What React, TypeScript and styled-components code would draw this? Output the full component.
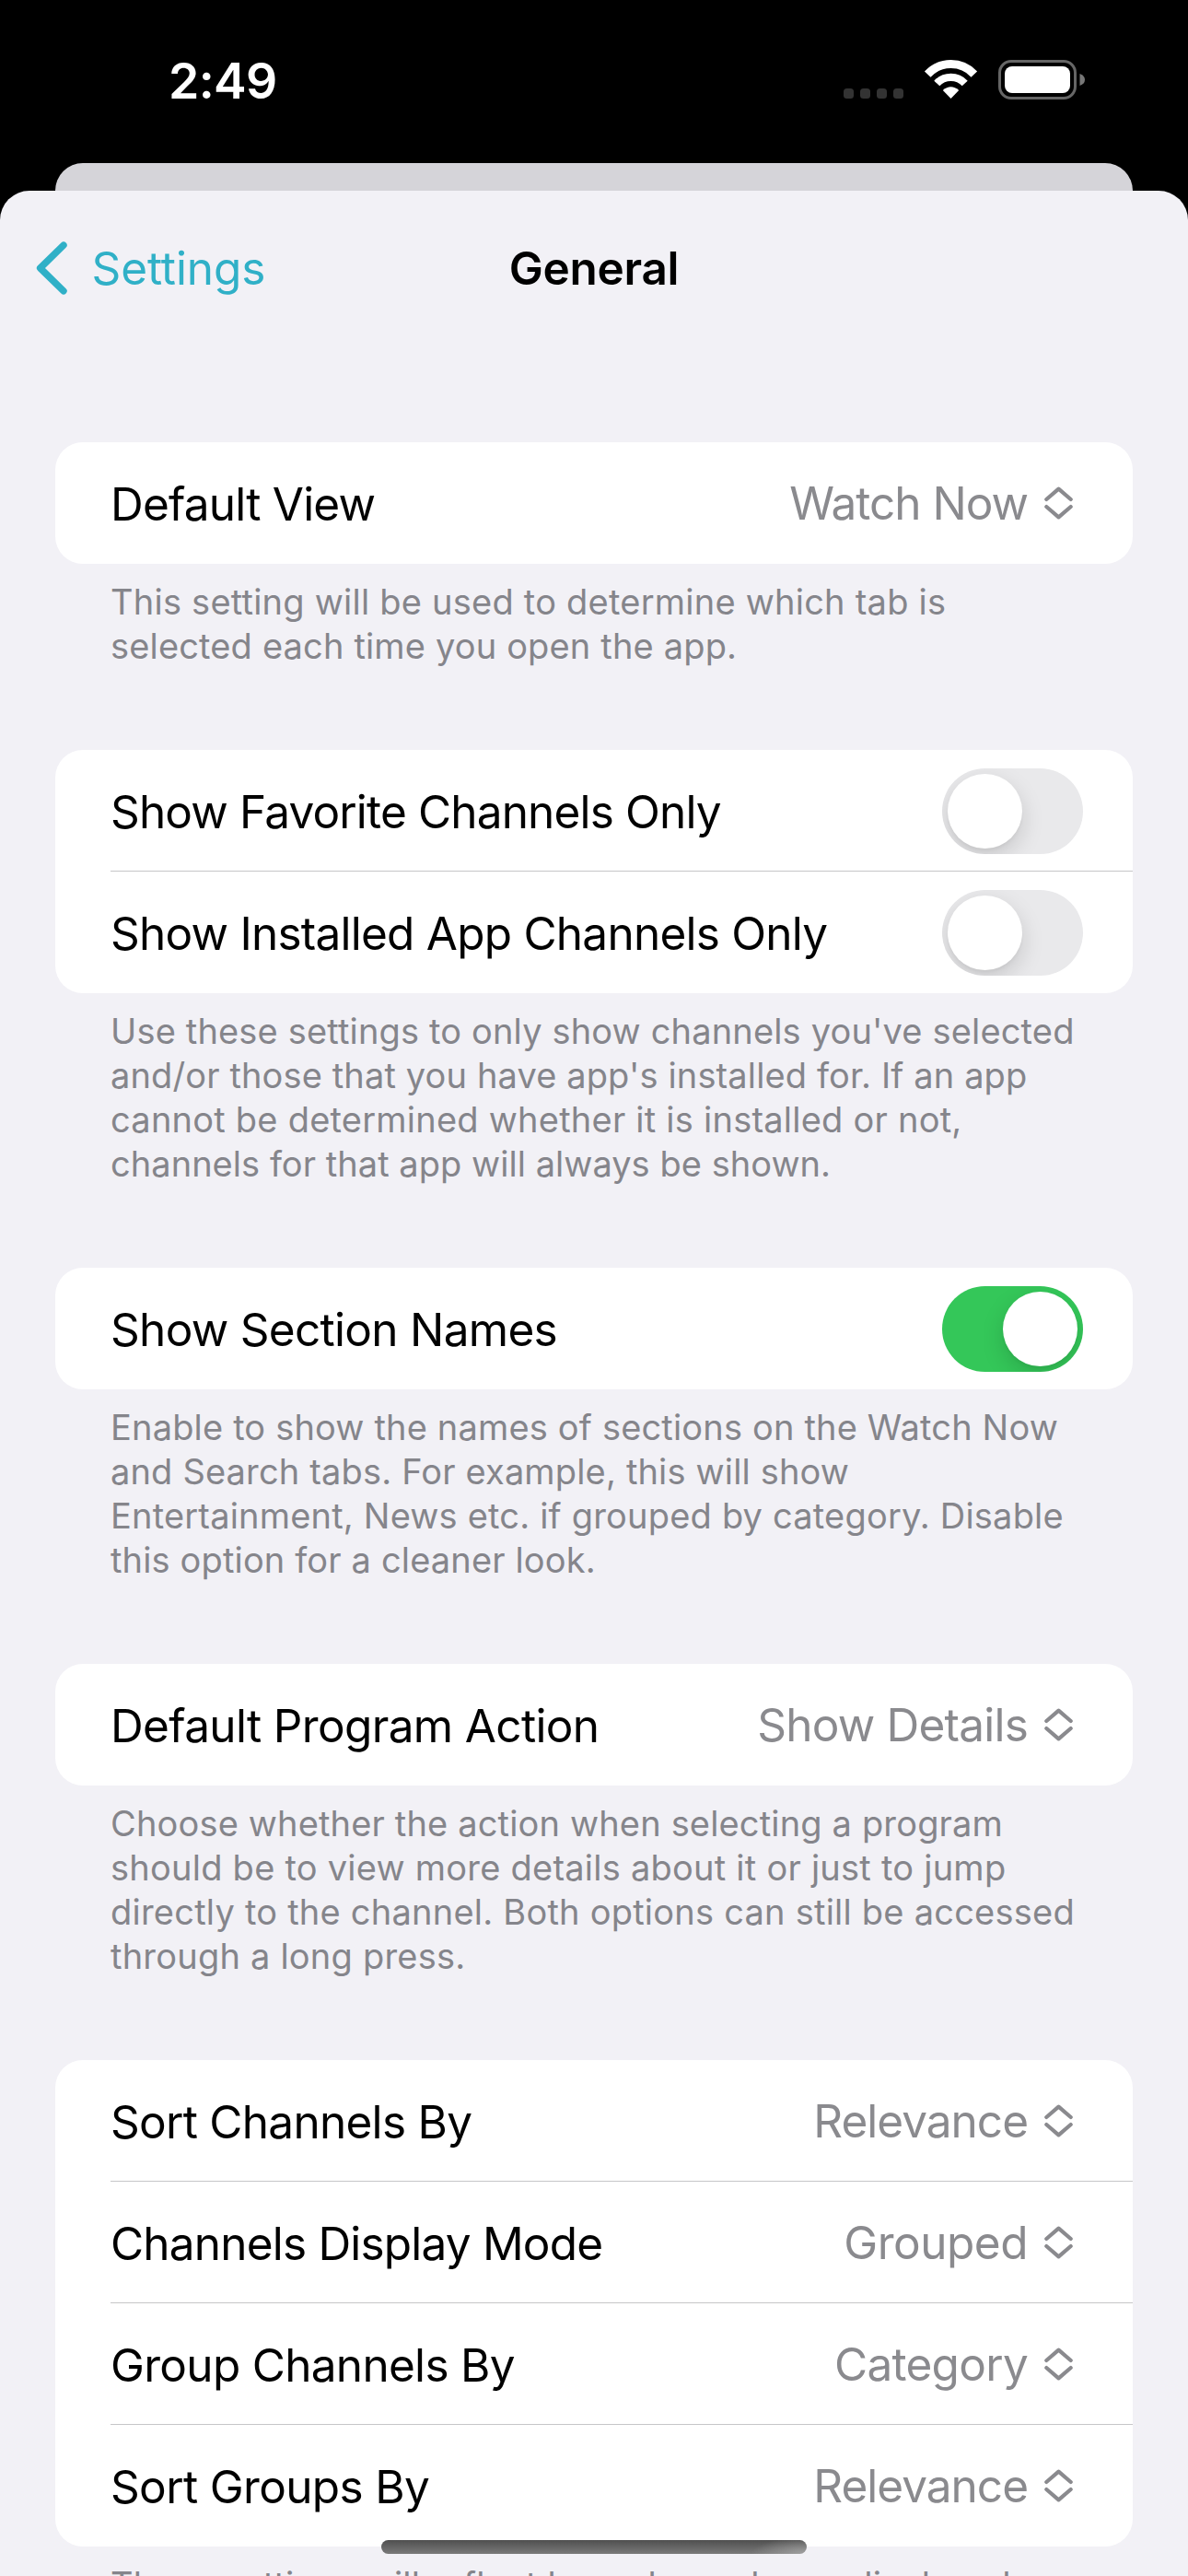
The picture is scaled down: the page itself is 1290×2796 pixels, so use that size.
import React from "react";
import styled, { createGlobalStyle } from "styled-components";

const GlobalStyle = createGlobalStyle`
  * { box-sizing: border-box; }
  html, body { margin: 0; padding: 0; background: #000; }
  body { width: 1290px; height: 2796px; overflow: hidden; }
`;

const Screen = styled.div`
  position: relative;
  display: flex;
  flex-direction: column;
  width: 1290px;
  height: 2796px;
  overflow: hidden;
  background: #000;
  font-family: Inter, "Liberation Sans", sans-serif;
  font-size: 49.5px;
  color: #000;
`;

const StatusBar = styled.header`
  display: flex;
  justify-content: space-between;
  align-items: flex-start;
  height: 177px;
  padding: 58px 112px 0 183px;
  flex: none;
`;

const Clock = styled.time`
  color: #fff;
  font-weight: 600;
  font-size: 53.5px;
  line-height: 59px;
  letter-spacing: -0.7px;
`;

const StatusIcons = styled.svg`
  display: block;
  width: 262px;
  height: 43px;
  margin-top: 7px;
`;

const SheetBehind = styled.div`
  height: 30px;
  margin: 0 60px;
  flex: none;
  background: #d5d4d9;
  border-radius: 30px 30px 0 0;
`;

const Sheet = styled.main`
  display: flex;
  flex-direction: column;
  flex: 1;
  min-height: 0;
  overflow: hidden;
  background: #f2f1f6;
  border-radius: 32px 32px 0 0;
`;

const NavBar = styled.nav`
  display: grid;
  grid-template-columns: 1fr auto 1fr;
  align-items: center;
  height: 168px;
  padding: 0 39px;
  margin-bottom: 105px;
  flex: none;
`;

const Back = styled.a`
  display: flex;
  align-items: center;
  gap: 26.5px;
  color: #30b0c7;
  letter-spacing: -0.1px;
`;

const Title = styled.h1`
  margin: 0;
  font-size: 49.5px;
  font-weight: 600;
  letter-spacing: -0.3px;
`;

const Section = styled.section`
  margin: 0 60px 89px;
  flex: none;
`;

const Card = styled.div`
  background: #fff;
  border-radius: 30px;
  overflow: hidden;
`;

const Row = styled.div`
  display: flex;
  align-items: center;
  justify-content: space-between;
  height: 132px;
  margin-left: 60px;
  padding: 2px 54px 0 0;
  border-bottom: 1px solid #c6c6c8;
  &:last-child { border-bottom-color: transparent; }
`;

const Label = styled.span<{ $tracking: number }>`
  white-space: nowrap;
  letter-spacing: ${(p) => p.$tracking}px;
`;

const Value = styled.span`
  display: flex;
  align-items: center;
  gap: 18px;
  padding: 0 11px 2px 0;
  color: #8a8a8e;
`;

const Track = styled.span<{ $on: boolean }>`
  display: flex;
  justify-content: ${(p) => (p.$on ? "flex-end" : "flex-start")};
  width: 153px;
  height: 93px;
  padding: 6px;
  border-radius: 47px;
  overflow: hidden;
  background: ${(p) => (p.$on ? "#34c759" : "#e9e9eb")};
`;

const Knob = styled.span`
  width: 81px;
  height: 81px;
  border-radius: 50%;
  background: #fff;
  box-shadow: 0 9px 24px rgba(0, 0, 0, 0.15), 0 3px 3px rgba(0, 0, 0, 0.03);
`;

const Caption = styled.p`
  margin: 0;
  padding: 17px 0 0 60px;
  font-size: 38px;
  line-height: 48px;
  color: #85858b;
  white-space: nowrap;
`;

const Line = styled.span<{ $tracking: number }>`
  display: block;
  letter-spacing: ${(p) => p.$tracking}px;
`;

const HomeIndicator = styled.div`
  position: absolute;
  left: 414px;
  top: 2757px;
  width: 462px;
  height: 15px;
  border-radius: 8px;
  background:
    radial-gradient(60px 18px at 100% 100%, rgba(175, 175, 175, 0.75), rgba(175, 175, 175, 0)),
    linear-gradient(#4f4f4f, #7a7a7a);
`;

type Text = [string, number];
type Item = { label: Text; value?: Text; on?: boolean };
type Group = { items: Item[]; caption: Text[] };

const groups: Group[] = [
  {
    items: [{ label: ["Default View", -0.78], value: ["Watch Now", -1] }],
    caption: [
      ["This setting will be used to determine which tab is", 0.23],
      ["selected each time you open the app.", 0.16],
    ],
  },
  {
    items: [
      { label: ["Show Favorite Channels Only", -0.84], on: false },
      { label: ["Show Installed App Channels Only", -0.76], on: false },
    ],
    caption: [
      ["Use these settings to only show channels you've selected", 0.16],
      ["and/or those that you have app's installed for. If an app", 0.13],
      ["cannot be determined whether it is installed or not,", 0.23],
      ["channels for that app will always be shown.", 0.04],
    ],
  },
  {
    items: [{ label: ["Show Section Names", -0.7], on: true }],
    caption: [
      ["Enable to show the names of sections on the Watch Now", 0.17],
      ["and Search tabs. For example, this will show", 0.16],
      ["Entertainment, News etc. if grouped by category. Disable", 0.19],
      ["this option for a cleaner look.", 0.15],
    ],
  },
  {
    items: [{ label: ["Default Program Action", -0.65], value: ["Show Details", -0.78] }],
    caption: [
      ["Choose whether the action when selecting a program", 0.16],
      ["should be to view more details about it or just to jump", 0.24],
      ["directly to the channel. Both options can still be accessed", 0.23],
      ["through a long press.", 0.21],
    ],
  },
  {
    items: [
      { label: ["Sort Channels By", -0.72], value: ["Relevance", -1] },
      { label: ["Channels Display Mode", -0.8], value: ["Grouped", -0.5] },
      { label: ["Group Channels By", -0.7], value: ["Category", -0.72] },
      { label: ["Sort Groups By", -0.65], value: ["Relevance", -1] },
    ],
    caption: [["These settings will reflect how channels are displayed", 0.18]],
  },
];

const UpDown = () => (
  <svg width="31" height="36" viewBox="0 0 31 36" fill="none" stroke="#8a8a8e" strokeWidth="4.2" strokeLinecap="round" strokeLinejoin="round">
    <path d="M2.3 14 L15.5 2.6 L28.7 14 M2.3 22 L15.5 33.4 L28.7 22" />
  </svg>
);

const Chevron = () => (
  <svg width="34" height="58" viewBox="0 0 34 58" fill="none" stroke="#30b0c7" strokeWidth="7.4" strokeLinecap="round" strokeLinejoin="round">
    <path d="M30 4.2 L4.6 29 L30 53.8" />
  </svg>
);

export default function App() {
  return (
    <>
      <GlobalStyle />
      <Screen>
        <StatusBar>
          <Clock>2:49</Clock>
          <StatusIcons viewBox="0 0 262 43">
            <g fill="#333">
              <rect x="0" y="31" width="11" height="11" rx="3.5" />
              <rect x="18" y="31" width="11" height="11" rx="3.5" />
              <rect x="36" y="31" width="11" height="11" rx="3.5" />
              <rect x="54" y="31" width="11" height="11" rx="3.5" />
            </g>
            <g fill="none" stroke="#fff">
              <path d="M91.2 15.6 A34.5 34.5 0 0 1 141.8 15.6" strokeWidth="9" />
              <path d="M101.3 25.5 A20.7 20.7 0 0 1 131.7 25.5" strokeWidth="8.2" />
            </g>
            <path d="M116.5 42 L107.8 33 Q116.5 25.5 125.2 33 Z" fill="#fff" />
            <rect x="169.5" y="1.5" width="82" height="40" rx="12.5" fill="none" stroke="#666" strokeWidth="3" />
            <rect x="175" y="7" width="71" height="29" rx="8" fill="#fff" />
            <path d="M256.5 15 Q262 17 262 21.5 Q262 26 256.5 28 Z" fill="#777" />
          </StatusIcons>
        </StatusBar>
        <SheetBehind />
        <Sheet>
          <NavBar>
            <Back>
              <Chevron />
              Settings
            </Back>
            <Title>General</Title>
          </NavBar>
          {groups.map((group, i) => (
            <Section key={i}>
              <Card>
                {group.items.map((item) => (
                  <Row key={item.label[0]}>
                    <Label $tracking={item.label[1]}>{item.label[0]}</Label>
                    {item.value ? (
                      <Value>
                        <Label $tracking={item.value[1]}>{item.value[0]}</Label>
                        <UpDown />
                      </Value>
                    ) : (
                      <Track $on={!!item.on}>
                        <Knob />
                      </Track>
                    )}
                  </Row>
                ))}
              </Card>
              <Caption>
                {group.caption.map(([text, tracking]) => (
                  <Line key={text} $tracking={tracking}>{text} </Line>
                ))}
              </Caption>
            </Section>
          ))}
        </Sheet>
        <HomeIndicator />
      </Screen>
    </>
  );
}
